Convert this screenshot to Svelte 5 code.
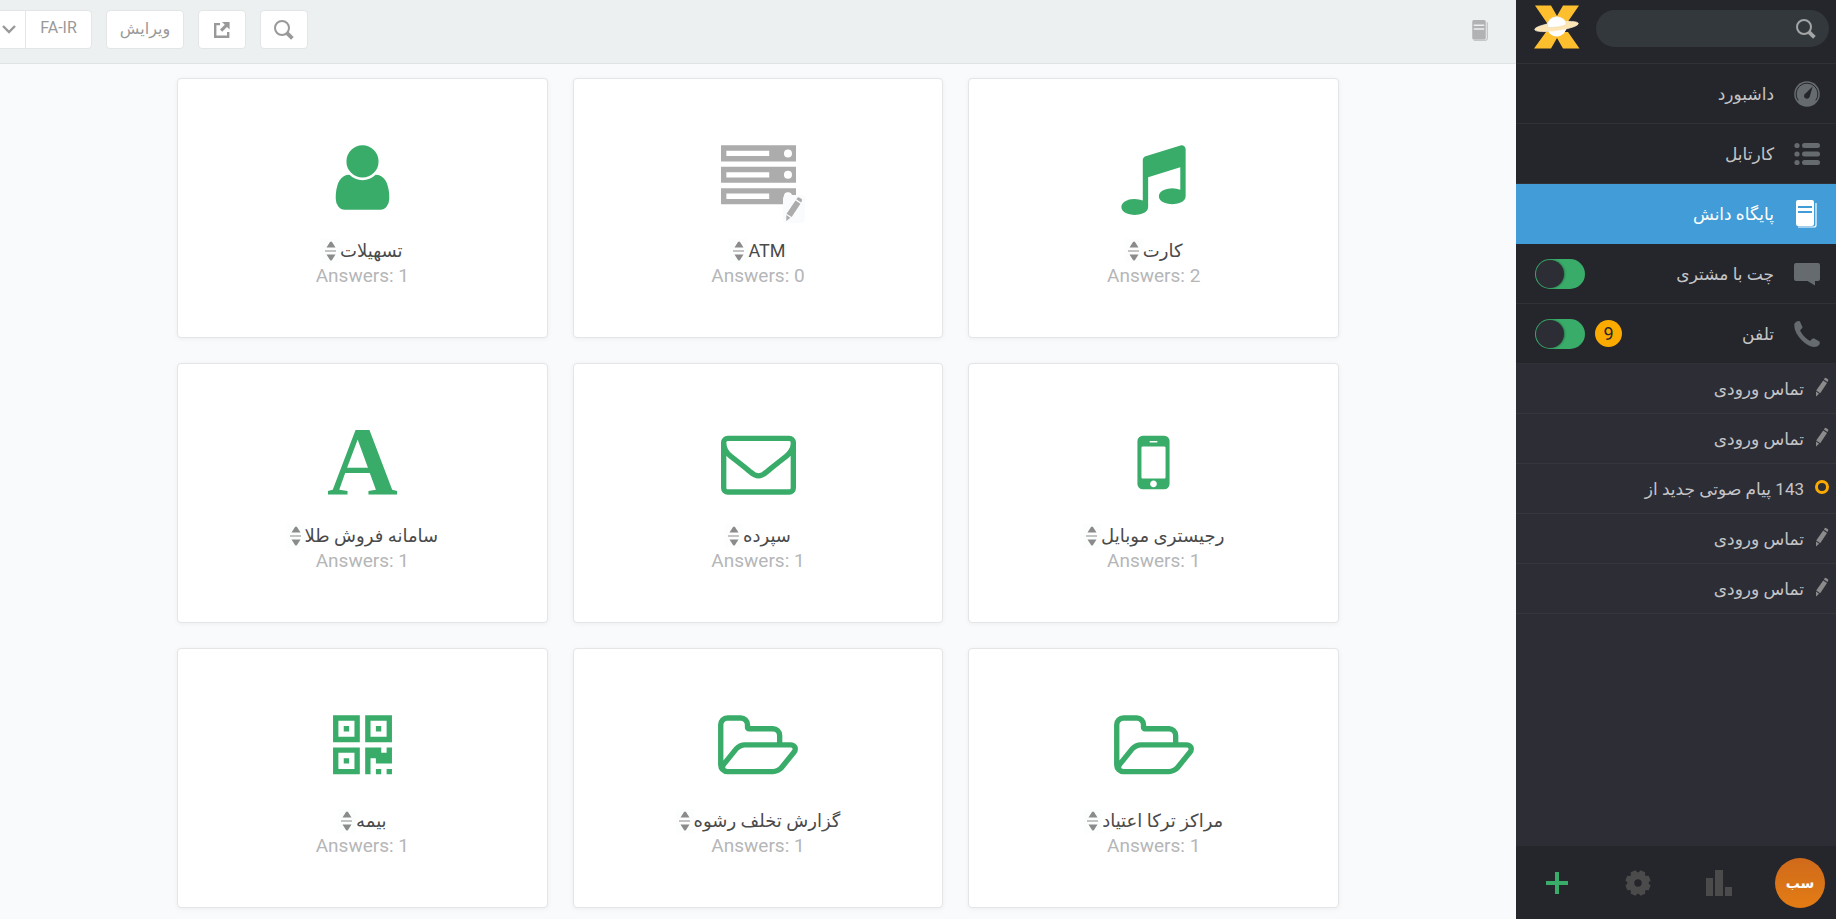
<script>
  const icons = {
    music: 'M1664 224v1120q0 50-34 89t-86 60.5-103.5 32-96.5 10.5-96.5-10.5-103.5-32-86-60.5-34-89 34-89 86-60.5 103.5-32 96.5-10.5q105 0 192 39v-537l-768 237v709q0 50-34 89t-86 60.5-103.5 32-96.5 10.5-96.5-10.5-103.5-32-86-60.5-34-89 34-89 86-60.5 103.5-32 96.5-10.5q105 0 192 39v-967q0-31 19-56.5t49-35.5l832-256q12-4 28-4 40 0 68 28t28 68z',
    server: 'M0 128h1792v384h-1792zM128 256v128h1024v-128zM1504 320a96 96 0 1 0 192 0a96 96 0 1 0-192 0zM0 640h1792v384h-1792zM128 768v128h1024v-128zM1504 832a96 96 0 1 0 192 0a96 96 0 1 0-192 0zM0 1152h1792v384h-1792zM128 1280v128h1024v-128zM1504 1344a96 96 0 1 0 192 0a96 96 0 1 0-192 0z',
    user: 'M1536 1399q0 109-62.5 187t-150.5 78h-854q-88 0-150.5-78t-62.5-187q0-85 8.5-160.5t31.5-152 58.5-131 94-89 134.5-34.5q131 128 313 128t313-128q76 0 134.5 34.5t94 89 58.5 131 31.5 152 8.5 160.5zm-256-887q0 159-112.5 271.5t-271.5 112.5-271.5-112.5-112.5-271.5 112.5-271.5 271.5-112.5 271.5 112.5 112.5 271.5z',
    mobile: 'M976 1408q0-33-23.5-56.5t-56.5-23.5-56.5 23.5-23.5 56.5 23.5 56.5 56.5 23.5 56.5-23.5 23.5-56.5zm208-160v-704q0-13-9.5-22.5t-22.5-9.5h-512q-13 0-22.5 9.5t-9.5 22.5v704q0 13 9.5 22.5t22.5 9.5h512q13 0 22.5-9.5t9.5-22.5zm-192-848q0-16-16-16h-160q-16 0-16 16t16 16h160q16 0 16-16zm288-16v1024q0 52-38 90t-90 38h-512q-52 0-90-38t-38-90v-1024q0-52 38-90t90-38h512q52 0 90 38t38 90z',
    mail: 'M1664 1504v-768q-32 36-69 66-268 206-426 338-51 43-83 67t-86.5 48.5-102.5 24.5h-2q-48 0-102.5-24.5t-86.5-48.5-83-67q-158-132-426-338-37-30-69-66v768q0 13 9.5 22.5t22.5 9.5h1472q13 0 22.5-9.5t9.5-22.5zm0-1051v-24.5l-.5-13-3-12.5-5.5-9-9-7.5-14-2.5h-1472q-13 0-22.5 9.5t-9.5 22.5q0 168 147 284 193 152 401 317 6 5 35 29.5t46 37.5 44.5 31.5 50.5 27.5 43 9h2q20 0 43-9t50.5-27.5 44.5-31.5 46-37.5 35-29.5q208-165 401-317 54-43 100.5-115.5t46.5-131.5zm128-37v1088q0 66-47 113t-113 47h-1472q-66 0-113-47t-47-113v-1088q0-66 47-113t113-47h1472q66 0 113 47t47 113z',
    folder: 'M1717 931q0-35-53-35h-1088q-40 0-85.5 21.5t-71.5 52.5l-294 363q-18 24-18 40 0 35 53 35h1088q40 0 86-22t71-53l294-363q18-22 18-39zm-1141-163h768v-160q0-40-28-68t-68-28h-576q-40 0-68-28t-28-68v-64q0-40-28-68t-68-28h-320q-40 0-68 28t-28 68v853l256-315q44-53 116-87.5t140-34.5zm1269 163q0 62-46 120l-295 363q-43 53-116 87.5t-140 34.5h-1088q-92 0-158-66t-66-158v-960q0-92 66-158t158-66h320q92 0 158 66t66 158v32h544q92 0 158 66t66 158v160h192q54 0 99 24.5t67 70.5q15 32 15 68z',
    qr: 'M192 128h640v640h-640zM320 256v384h384v-384zM448 384h128v128h-128zM960 128h640v640h-640zM1088 256v384h384v-384zM1216 384h128v128h-128zM192 896h640v640h-640zM320 1024v384h384v-384zM448 1152h128v128h-128zM960 896h384v128h128v-128h128v384h-384v-128h-128v384h-128zM1216 1408h128v128h-128zM1472 1408h128v128h-128z'
  };

  const cards = [
    { title: 'کارت', answers: 2, icon: 'music' },
    { title: 'ATM', answers: 0, icon: 'server', draft: true },
    { title: 'تسهیلات', answers: 1, icon: 'user' },
    { title: 'رجیستری موبایل', answers: 1, icon: 'mobile' },
    { title: 'سپرده', answers: 1, icon: 'mail' },
    { title: 'سامانه فروش طلا', answers: 1, letter: 'A' },
    { title: 'مراکز ترکا اعتیاد', answers: 1, icon: 'folder' },
    { title: 'گزارش تخلف رشوه', answers: 1, icon: 'folder' },
    { title: 'بیمه', answers: 1, icon: 'qr' }
  ];

  const menu = [
    { id: 'dashboard', label: 'داشبورد' },
    { id: 'inbox', label: 'کارتابل' },
    { id: 'book', label: 'پایگاه دانش' },
    { id: 'chat', label: 'چت با مشتری', toggle: true },
    { id: 'phone', label: 'تلفن', toggle: true, count: 9 }
  ];

  const calls = [
    { text: 'تماس ورودی' },
    { text: 'تماس ورودی' },
    { text: '143 پیام صوتی جدید از', unread: true },
    { text: 'تماس ورودی' },
    { text: 'تماس ورودی' }
  ];

  let selected = $state('book');
  let search = $state('');
</script>

{#snippet magnifier()}
  <svg width="20" height="20" viewBox="0 0 20 20" fill="none" stroke="currentColor">
    <circle cx="8" cy="8" r="7" stroke-width="2" />
    <path d="M12.800 12.800L18.400 18.400" stroke-width="3.800" />
  </svg>
{/snippet}

{#snippet book(size)}
  <svg width={size} height={size} viewBox="0 0 28 28" fill="currentColor">
    <path fill-rule="evenodd" d="M5 0h14a2 2 0 0 1 2 2v22a2 2 0 0 1-2 2H5a2 2 0 0 1-2-2V2a2 2 0 0 1 2-2zM5 6v2h14V6zM5 11v2h14v-2z" />
    <path d="M23 3v22q0 2-2 2H5" fill="none" stroke="currentColor" stroke-width="1.200" />
  </svg>
{/snippet}

{#snippet pencil(width, height)}
  <svg {width} {height} viewBox="0 0 14 20" fill="currentColor">
    <path d="M8.800 2.400L9.900 1Q10.400 .6 11 1L13 2.300Q13.500 2.800 13.200 3.400L12.500 4.900zM8.200 3.400L12 6L5.200 16.200L1.200 13.600zM1 14.600L4.200 16.800L1 19.400z" />
  </svg>
{/snippet}

<div class="page" dir="rtl" lang="fa">
  <aside>
    <div class="sidebar-header">
      <div class="search">
        <input type="text" aria-label="جستجو" bind:value={search} />
        {@render magnifier()}
      </div>
      <a class="logo" href="/" aria-label="خانه">
        <svg width="46" height="44" viewBox="0 0 46 44">
          <path fill="#fdbf2d" d="M1 .5H17L23 11L29 .5H45L33 18H13zM0 43.500L12 27H34L45.500 43.500H29L23 33L17 43.500z" />
          <circle cx="22.700" cy="21.500" r="10" fill="#fff" />
          <ellipse cx="22.500" cy="21.500" rx="22" ry="4.200" fill="#fde5b4" stroke="#fff3da" stroke-width=".6" transform="rotate(-8 22.500 21.500)" />
          <path fill="#fff" stroke="#e7cf9e" stroke-width=".4" d="M13.600 22.500Q12.500 13 22.700 11.500Q32 12.500 32.300 19.500Q27 22.500 13.600 22.500z" />
        </svg>
      </a>
    </div>

    <nav>
      <ul class="menu">
        {#each menu as item}
          <li class:current={selected === item.id}>
            <a href="#{item.id}" onclick={() => (selected = item.id)}>
              <span class="menu-icon">
                {#if item.id === 'dashboard'}
                  <svg width="26" height="26" viewBox="0 0 26 26">
                    <circle cx="13" cy="13" r="12.800" fill="currentColor" />
                    <path d="M4.200 19.500A10.900 10.900 0 1 1 21.800 19.500" fill="none" stroke="#25262b" stroke-width="1" />
                    <path d="M18.600 5.500L15.600 16Q14.200 18.700 11.300 17.300Q9.200 15.500 10.700 13.200z" fill="#25262b" />
                  </svg>
                {:else if item.id === 'inbox'}
                  <svg width="26" height="24" viewBox="0 0 26 24" fill="currentColor">
                    <circle cx="3" cy="3.500" r="2.600" />
                    <circle cx="3" cy="12" r="2.600" />
                    <circle cx="3" cy="20.500" r="2.600" />
                    <rect x="8" y="1" width="18" height="5" rx="2.500" />
                    <rect x="8" y="9.500" width="18" height="5" rx="2.500" />
                    <rect x="8" y="18" width="18" height="5" rx="2.500" />
                  </svg>
                {:else if item.id === 'book'}
                  {@render book(28)}
                {:else if item.id === 'chat'}
                  <svg width="26" height="24" viewBox="0 0 26 24" fill="currentColor">
                    <path d="M2 1H24Q26 1 26 3V17Q26 19 24 19H21V23.500L13.500 19H2Q0 19 0 17V3Q0 1 2 1z" />
                  </svg>
                {:else}
                  <svg width="26" height="26" viewBox="0 0 26 26" fill="currentColor">
                    <path d="M.5 2.500Q3 -.5 5.800 .2L8.500 6Q8.800 7.200 6 9.300Q8.500 15.500 16 20Q18.500 17 19.700 17.300L25.500 20.500Q26.800 23.500 23 25.500Q16 27.500 8 19.500Q-1 10 .5 2.500z" />
                  </svg>
                {/if}
              </span>
              {item.label}
            </a>
            {#if item.count}
              <span class="count">{item.count}</span>
            {/if}
            {#if item.toggle}
              <input type="checkbox" role="switch" aria-label={item.label} checked />
            {/if}
          </li>
        {/each}
      </ul>

      <ul class="calls">
        {#each calls as call}
          <li>
            <a href="#call">
              <span class="status">
                {#if call.unread}
                  <span class="ring"></span>
                {:else}
                  {@render pencil(14, 20)}
                {/if}
              </span>
              {call.text}
            </a>
          </li>
        {/each}
      </ul>
    </nav>

    <footer>
      <button type="button" class="avatar">سب</button>
      <button type="button" aria-label="گزارش">
        <svg width="26" height="26" viewBox="0 0 26 26" fill="currentColor">
          <path d="M0 8h7v18H0zM9 0h8v26H9zM19 17h7v9h-7z" />
        </svg>
      </button>
      <button type="button" aria-label="تنظیمات">
        <svg width="26" height="26" viewBox="-13 -13 26 26">
          <circle r="7.200" fill="none" stroke="currentColor" stroke-width="7" />
          {#each [22.5, 67.5, 112.5, 157.5, 202.5, 247.5, 292.5, 337.5] as angle}
            <path d="M-3.800 -9L-2.600 -12.600H2.600L3.800 -9z" fill="currentColor" transform="rotate({angle})" />
          {/each}
        </svg>
      </button>
      <button type="button" class="add" aria-label="افزودن">
        <svg width="22" height="22" viewBox="0 0 22 22" fill="currentColor">
          <path d="M9 0h4v9h9v4h-9v9H9v-9H0V9h9z" />
        </svg>
      </button>
    </footer>
  </aside>

  <main>
    <header>
      <span class="crumb">{@render book(21)}</span>
      <div class="tools">
        <button type="button" aria-label="جستجو">{@render magnifier()}</button>
        <button type="button" aria-label="باز کردن">
          <svg width="16" height="16" viewBox="0 0 16 16" fill="currentColor">
            <path d="M0 1H6V3.200H2.400V13.600H13V10H15.400V16H0zM8 0H15.600V7.600L13 5L8.200 9.800L6 7.600L10.800 2.800z" />
          </svg>
        </button>
        <button type="button" class="edit">ویرایش</button>
        <div class="language">
          <button type="button" class="locale">FA-IR</button>
          <button type="button" class="arrow" aria-label="انتخاب زبان">
            <svg width="14" height="9" viewBox="0 0 14 9" fill="none" stroke="currentColor" stroke-width="2.400">
              <path d="M1 1L7 7L13 1" />
            </svg>
          </button>
        </div>
      </div>
    </header>

    <section class="cards">
      {#each cards as card}
        <article class:draft={card.draft}>
          <div class="card-icon">
            {#if card.letter}
              <span class="letter">{card.letter}</span>
            {:else}
              <svg width={card.icon === 'folder' ? 80 : 75} height="75" viewBox={card.icon === 'folder' ? '-64 0 1909 1792' : '0 0 1792 1792'}>
                <path fill="currentColor" fill-rule="evenodd" d={icons[card.icon]} />
              </svg>
            {/if}
            {#if card.draft}
              <span class="draft-mark">{@render pencil(18, 26)}</span>
            {/if}
          </div>
          <h3>
            {card.title}
            <button type="button" class="sort" aria-label="جابجایی">
              <svg width="18" height="24" viewBox="0 0 18 24" fill="currentColor">
                <path d="M4.500 8.500L8 3Q9 2 10 3L13.500 8.500zM3 11.500h11v1H3zM4.500 15.500H13.500L10 21Q9 22 8 21z" />
              </svg>
            </button>
          </h3>
          <p dir="ltr">Answers: {card.answers}</p>
        </article>
      {/each}
    </section>
  </main>
</div>

<style>
  :global(body) {
    margin: 0;
  }

  .page {
    display: flex;
    height: 100vh;
    overflow: hidden;
    background-color: #f9fafc;
    font-family: Roboto, "DejaVu Sans", sans-serif;
    font-size: 16px;
  }

  .page * {
    box-sizing: border-box;
  }

  svg {
    display: block;
    flex: none;
  }

  button {
    padding: 0;
    border: none;
    background: none;
    font: inherit;
    color: inherit;
    cursor: pointer;
  }

  ul {
    list-style: none;
    margin: 0;
    padding: 0;
  }

  a {
    color: inherit;
    text-decoration: none;
  }

  /* sidebar */
  aside {
    display: flex;
    flex-direction: column;
    flex: none;
    width: 320px;
    background-color: #2d2d36;
    color: #c4c5c7;
  }

  .sidebar-header {
    display: flex;
    align-items: flex-start;
    justify-content: space-between;
    height: 64px;
    padding: 5px 7px 0 18px;
    border-bottom: 1px solid #303136;
    background-color: #25262b;
  }

  .search {
    display: flex;
    flex-direction: row-reverse;
    align-items: center;
    width: 233px;
    height: 37px;
    margin-top: 5px;
    padding: 0 13px;
    border-radius: 19px;
    background-color: #33383c;
    color: #a3a5a6;
  }

  .search input {
    flex: 1;
    min-width: 0;
    border: none;
    outline: none;
    background: none;
    color: inherit;
    font: inherit;
  }

  nav {
    flex: 1;
    font-size: 17px;
  }

  .menu li {
    display: flex;
    align-items: center;
    gap: 10px;
    height: 60px;
    padding-left: 19px;
    border-bottom: 1px solid #303136;
    background-color: #25262b;
  }

  .menu a {
    display: flex;
    flex: 1;
    align-items: center;
    gap: 19px;
    height: 100%;
    padding-right: 15px;
  }

  .menu-icon {
    display: flex;
    justify-content: center;
    width: 28px;
    color: #666b70;
  }

  .menu .current {
    border-color: #419cd7;
    background-color: #419cd7;
    color: white;
  }

  .current .menu-icon {
    color: white;
  }

  .count {
    width: 27px;
    height: 27px;
    border-radius: 50%;
    background-color: #fbaa00;
    color: #25262b;
    font-size: 18px;
    line-height: 27px;
    text-align: center;
  }

  .menu input {
    appearance: none;
    width: 50px;
    height: 30px;
    margin: 0;
    padding: 1px;
    border-radius: 15px;
    background-color: #3aac6a;
    direction: ltr;
  }

  .menu input::before {
    content: "";
    display: block;
    width: 28px;
    height: 28px;
    border-radius: 50%;
    background-color: #2d2d36;
    box-shadow: 1px 0 2px rgba(0, 0, 0, 0.3);
  }

  .calls a {
    display: flex;
    align-items: center;
    gap: 11px;
    height: 50px;
    padding-right: 7px;
    border-bottom: 1px solid #36373c;
  }

  .status {
    padding-bottom: 3px;
    color: #8b8b8b;
  }

  .ring {
    display: block;
    width: 14px;
    height: 14px;
    border: 3px solid #fbaa00;
    border-radius: 50%;
  }

  footer {
    display: flex;
    align-items: center;
    justify-content: space-between;
    height: 73px;
    padding: 0 11px 0 16px;
    background-color: #25262b;
    color: #4b4b4b;
  }

  footer button {
    display: flex;
    align-items: center;
    justify-content: center;
    width: 50px;
    height: 50px;
  }

  .avatar {
    border-radius: 50%;
    background: linear-gradient(#cf6a1b, #e47c14);
    color: white;
    font-weight: bold;
    font-size: 14px;
  }

  .add {
    color: #3aac6a;
  }

  /* content */
  main {
    flex: 1;
    min-width: 0;
  }

  header {
    display: flex;
    align-items: flex-start;
    justify-content: space-between;
    height: 64px;
    padding-top: 10px;
    border-bottom: 1px solid #dfe3e4;
    background-color: #ecf0f1;
  }

  .crumb {
    padding: 10px 25px 0 0;
    color: #b0b2b3;
  }

  .tools {
    display: flex;
    gap: 14px;
    color: #999;
  }

  .tools button {
    display: flex;
    align-items: center;
    justify-content: center;
    width: 48px;
    height: 39px;
    border: 1px solid #e3e5e6;
    border-radius: 4px;
    background-color: white;
  }

  .tools .edit {
    width: 78px;
    padding-bottom: 2px;
  }

  .language {
    display: flex;
  }

  .tools .locale {
    width: 67px;
    border-radius: 0 4px 4px 0;
    padding-bottom: 4px;
  }

  .tools .arrow {
    width: 25px;
    padding-right: 8px;
    border-right: none;
    border-left: none;
    border-radius: 0;
  }

  .cards {
    display: grid;
    grid-template-columns: repeat(3, 1fr);
    gap: 25px;
    max-width: 1162px;
    margin: 14px auto 0;
  }

  article {
    display: flex;
    flex-direction: column;
    align-items: center;
    min-height: 260px;
    padding: 61px 20px 48px;
    border: 1px solid #e4e5e7;
    border-radius: 4px;
    background-color: white;
    box-shadow: 0 1px 5px rgba(0, 0, 0, 0.05);
    color: #3aac6a;
    font-size: 18px;
    line-height: 25px;
  }

  .draft {
    color: #acacac;
  }

  .card-icon {
    position: relative;
    height: 75px;
    margin-bottom: 23px;
  }

  .letter {
    display: block;
    font: bold 98px/73px "Liberation Serif", serif;
  }

  .draft-mark {
    position: absolute;
    right: -9px;
    bottom: -8px;
    padding: 1px 2px;
    border-radius: 4px;
    background-color: #fafbfc;
  }

  h3 {
    display: flex;
    align-items: center;
    height: 25px;
    margin: 0;
    color: #4a4a4a;
    font-size: inherit;
    font-weight: normal;
  }

  .sort {
    background-color: #fcfdfd;
    color: #8b8b8b;
  }

  p {
    margin: 0;
    color: #b5b6b8;
    font-size: 19px;
  }
</style>
